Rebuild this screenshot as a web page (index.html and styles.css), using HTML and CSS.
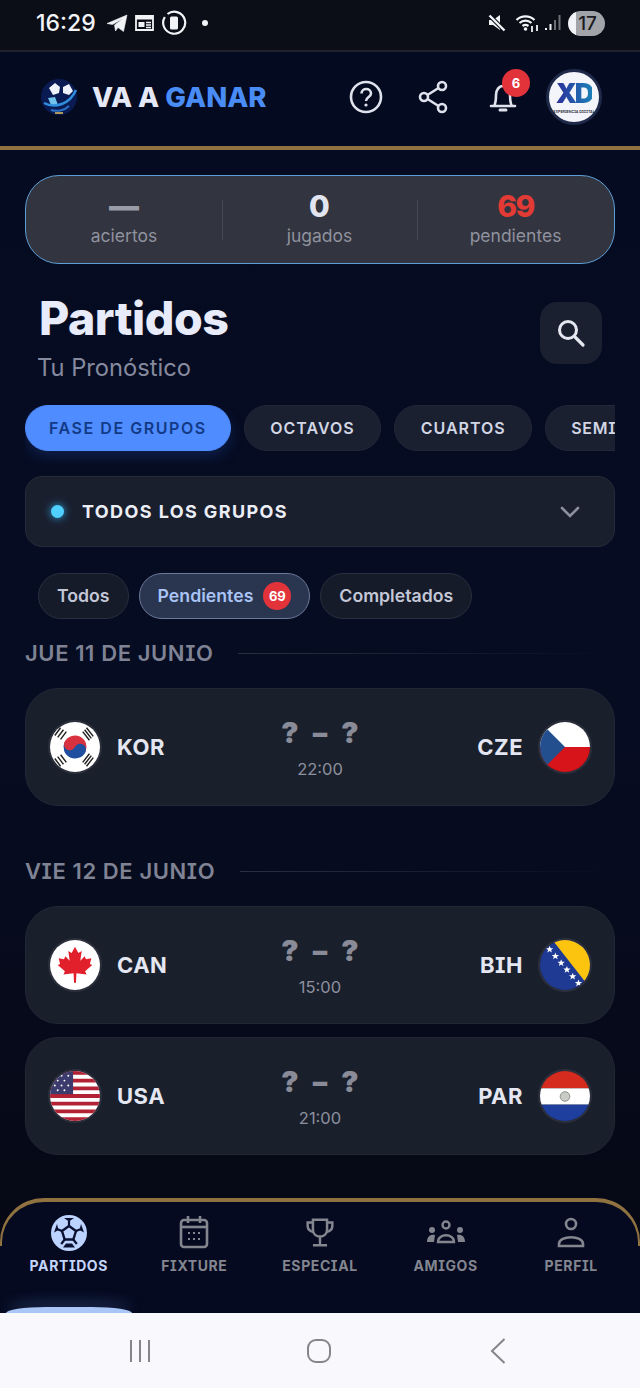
FILE: index.html
```html
<!DOCTYPE html>
<html lang="es">
<head>
<meta charset="UTF-8">
<title>Va a Ganar</title>
<link rel="stylesheet" href="styles.css">
</head>
<body>
<div id="app">

<div class="status">
  <div class="status-side">
    <span class="clock">16:29</span>
    <svg class="st-ico" width="22" height="20" viewBox="0 0 22 20"><path d="M1 10.500 21 2l-3.500 16.500-5.500-4-2.500 3.500-1-6 8.500-6.500-10.500 6z" fill="#f2f3f6" stroke="#f2f3f6" stroke-width=".6"/></svg>
    <svg class="st-ico" width="21" height="20" viewBox="0 0 21 20"><path d="M2 3h17v14H2z" fill="none" stroke="#f2f3f6" stroke-width="1.800"/><path d="M2 2.500h17v4H2z" fill="#f2f3f6"/><path d="M4.500 9h6v5h-6z" fill="#f2f3f6"/><path d="M12 9.500h5M12 12h5M12 14.500h5" stroke="#f2f3f6" stroke-width="1.300"/></svg>
    <svg class="st-ico" width="26" height="26" viewBox="0 0 26 26"><path d="M6.500 4A11 11 0 1 1 3.800 7" fill="none" stroke="#f2f3f6" stroke-width="2.200"/><rect x="9" y="6.500" width="8" height="13" rx="1.500" fill="#f2f3f6"/></svg>
    <span class="st-dot"></span>
  </div>
  <div class="status-side">
    <svg width="20" height="20" viewBox="0 0 20 20"><path d="M2 7h4l7-5v15l-7-5H2z" fill="#f2f3f6"/><path d="M2 2l16 16" stroke="#0b0d17" stroke-width="4.500"/><path d="M2.500 2.500l15 15" stroke="#f2f3f6" stroke-width="2.400"/></svg>
    <svg class="wifi" width="26" height="20" viewBox="0 0 26 20"><path d="M1.500 7a13 13 0 0 1 18 0M4.500 10a9 9 0 0 1 12 0M7.500 13a5 5 0 0 1 6 0" fill="none" stroke="#f2f3f6" stroke-width="2.200"/><circle cx="10.500" cy="16" r="1.800" fill="#f2f3f6"/><path d="M17 13v6M22 12v6" stroke="#f2f3f6" stroke-width="1.800"/></svg>
    <svg class="bars" width="18" height="20" viewBox="0 0 18 20"><path d="M2 17v-2M6.500 17v-6" stroke="#f2f3f6" stroke-width="2"/><path d="M11 17V7M15.500 17V2" stroke="#6e7078" stroke-width="2"/></svg>
    <span class="battery">17</span>
  </div>
</div>

<header class="topbar">
  <div class="brand">
    <svg class="brand-ball" width="38" height="38" viewBox="0 0 38 38">
      <circle cx="19" cy="19" r="18" fill="#0a1a52"/>
      <path d="M9 10l6-5 5 4-1 6-6 2zM23 9l6-3 4 7-4 4-6-2z" fill="#eef2fb"/>
      <path d="M8 20l7-1 3 8-7 0z" fill="#6fc3ec"/>
      <path d="M4 25c11 6 26 1 32-13" fill="none" stroke="#2f8fdc" stroke-width="2.500"/>
      <path d="M11 32c7 2 14 0 18-4" fill="none" stroke="#2a6fc4" stroke-width="2"/>
      <path d="M15 35h8" stroke="#d8b75c" stroke-width="1.600"/>
    </svg>
    <span class="brand-name">VA A <em>GANAR</em></span>
  </div>
  <div class="top-actions">
    <svg class="top-ico help" width="34" height="34" viewBox="0 0 34 34"><circle cx="17" cy="17" r="15" fill="none" stroke="#dfe2ec" stroke-width="2.600"/><path d="M12.500 13.500c0-6 9.500-6 9.500 0 0 3.500-5 3.500-5 7.500" fill="none" stroke="#dfe2ec" stroke-width="2.600"/><circle cx="17" cy="25" r="1.600" fill="#dfe2ec"/></svg>
    <svg class="top-ico share" width="32" height="34" viewBox="0 0 32 34"><circle cx="24" cy="6" r="4" fill="none" stroke="#dfe2ec" stroke-width="2.600"/><circle cx="6" cy="17" r="4" fill="none" stroke="#dfe2ec" stroke-width="2.600"/><circle cx="24" cy="28" r="4" fill="none" stroke="#dfe2ec" stroke-width="2.600"/><path d="M9.500 15 20.500 8M9.500 19l11 7" stroke="#dfe2ec" stroke-width="2.600"/></svg>
    <div class="bell-wrap">
      <svg width="30" height="36" viewBox="0 0 30 36"><path d="M3 27h24M6 27c2-3 2-6 2-11 0-5 3-9 7-9s7 4 7 9c0 5 0 8 2 11" fill="none" stroke="#dfe2ec" stroke-width="2.600" stroke-linecap="round"/><path d="M12 31h6" stroke="#dfe2ec" stroke-width="3" stroke-linecap="round"/></svg>
      <span class="bell-badge">6</span>
    </div>
    <div class="avatar">
      <span class="avatar-xd">XD</span>
      <span class="avatar-sub">EXPERIENCIA DIGITAL</span>
    </div>
  </div>
</header>

<main class="content">
  <section class="stats">
    <div class="stat"><b class="muted">—</b><span>aciertos</span></div>
    <div class="stat"><b>0</b><span>jugados</span></div>
    <div class="stat"><b class="red">69</b><span>pendientes</span></div>
  </section>

  <section class="title-row">
    <div>
      <h1>Partidos</h1>
      <p>Tu Pronóstico</p>
    </div>
    <button class="search-btn">
      <svg width="32" height="32" viewBox="0 0 32 32"><circle cx="13" cy="13" r="8.500" fill="none" stroke="#e4e7f0" stroke-width="3"/><path d="M19.500 19.500 28 28" stroke="#e4e7f0" stroke-width="3.200" stroke-linecap="round"/></svg>
    </button>
  </section>

  <nav class="tabs">
    <span class="tab active">FASE DE GRUPOS</span>
    <span class="tab">OCTAVOS</span>
    <span class="tab">CUARTOS</span>
    <span class="tab">SEMI</span>
  </nav>

  <div class="group-select">
    <span class="glow-dot"></span>
    <span class="group-name">TODOS LOS GRUPOS</span>
    <svg width="22" height="14" viewBox="0 0 22 14"><path d="M3 3l8 8 8-8" fill="none" stroke="#8b8f9e" stroke-width="2.600" stroke-linecap="round"/></svg>
  </div>

  <div class="chips">
    <span class="chip">Todos</span>
    <span class="chip on">Pendientes <i>69</i></span>
    <span class="chip">Completados</span>
  </div>

  <h2 class="date first">JUE 11 DE JUNIO</h2>
  <article class="match">
    <div class="team">
      <svg class="flag" viewBox="0 0 52 52">
        <rect width="52" height="52" fill="#fff"/>
        <g transform="rotate(25 26 26)">
          <path d="M14 26a12 12 0 0 1 24 0z" fill="#d8313f"/><path d="M14 26a12 12 0 0 0 24 0z" fill="#1f4f9e"/>
          <circle cx="20" cy="26" r="6" fill="#d8313f"/><circle cx="32" cy="26" r="6" fill="#1f4f9e"/>
        </g>
        <path d="M8 16l6-8M11 18l6-8M5 14l6-8M36 8l7 9M38 6l7 9M34 10l7 9M8 36l6 8M5 38l6 8M11 34l6 8M36 44l7-9M38 46l7-9M34 42l7-9" stroke="#222" stroke-width="1.500"/>
      </svg>
      <strong>KOR</strong>
    </div>
    <div class="score"><div class="score-nums"><b>?</b><b>–</b><b>?</b></div><time>22:00</time></div>
    <div class="team right">
      <strong>CZE</strong>
      <svg class="flag" viewBox="0 0 52 52">
        <rect width="52" height="26" fill="#fff"/><rect y="26" width="52" height="26" fill="#d7141a"/>
        <path d="M0 0l26 26L0 52z" fill="#234f8e"/>
      </svg>
    </div>
  </article>

  <h2 class="date">VIE 12 DE JUNIO</h2>
  <article class="match">
    <div class="team">
      <svg class="flag" viewBox="0 0 52 52">
        <rect width="52" height="52" fill="#fff"/>
        <path d="M26 7l-3.500 6.500-3.500-2 1.500 10-4.500-4.500-1.500 3-5.500-1 1.500 6-2.500 1 7.500 6.500-1.500 3.500 10.500-1.500.5 10h2l.5-10 10.500 1.500-1.500-3.500 7.500-6.500-2.500-1 1.500-6-5.500 1-1.500-3-4.500 4.500 1.500-10-3.500 2z" fill="#e2202c"/>
      </svg>
      <strong>CAN</strong>
    </div>
    <div class="score"><div class="score-nums"><b>?</b><b>–</b><b>?</b></div><time>15:00</time></div>
    <div class="team right">
      <strong>BIH</strong>
      <svg class="flag" viewBox="0 0 52 52">
        <rect width="52" height="52" fill="#1f3a93"/>
        <path d="M13 0h39v50z" fill="#fcc40f"/>
        <g fill="#fff">
          <path d="M10 6l1 2.600 2.800.1-2.200 1.700.8 2.700-2.400-1.600-2.400 1.600.8-2.700-2.200-1.700 2.800-.1z"/>
          <path d="M16 13l1 2.600 2.800.1-2.200 1.700.8 2.700-2.400-1.600-2.400 1.600.8-2.700-2.200-1.700 2.800-.1z"/>
          <path d="M22 20l1 2.600 2.800.1-2.200 1.700.8 2.700-2.400-1.600-2.400 1.600.8-2.700-2.200-1.700 2.800-.1z"/>
          <path d="M28 27l1 2.600 2.800.1-2.200 1.700.8 2.700-2.400-1.600-2.400 1.600.8-2.700-2.200-1.700 2.800-.1z"/>
          <path d="M34 34l1 2.600 2.800.1-2.200 1.700.8 2.700-2.400-1.600-2.400 1.600.8-2.700-2.200-1.700 2.800-.1z"/>
          <path d="M40 41l1 2.600 2.800.1-2.200 1.700.8 2.700-2.400-1.600-2.400 1.600.8-2.700-2.200-1.700 2.800-.1z"/>
        </g>
      </svg>
    </div>
  </article>

  <article class="match second">
    <div class="team">
      <svg class="flag" viewBox="0 0 52 52">
        <rect width="52" height="52" fill="#fff"/>
        <path d="M0 2h52M0 10h52M0 18h52M0 26h52M0 34h52M0 42h52M0 50h52" stroke="#b22234" stroke-width="4"/>
        <rect width="24" height="24" fill="#3c3b6e"/>
        <g fill="#fff"><circle cx="5" cy="5" r="1"/><circle cx="12" cy="5" r="1"/><circle cx="19" cy="5" r="1"/><circle cx="8" cy="10" r="1"/><circle cx="15" cy="10" r="1"/><circle cx="5" cy="15" r="1"/><circle cx="12" cy="15" r="1"/><circle cx="19" cy="15" r="1"/><circle cx="8" cy="20" r="1"/><circle cx="15" cy="20" r="1"/></g>
      </svg>
      <strong>USA</strong>
    </div>
    <div class="score"><div class="score-nums"><b>?</b><b>–</b><b>?</b></div><time>21:00</time></div>
    <div class="team right">
      <strong>PAR</strong>
      <svg class="flag" viewBox="0 0 52 52">
        <rect width="52" height="18" fill="#d52b1e"/><rect y="18" width="52" height="17" fill="#fff"/><rect y="35" width="52" height="17" fill="#1f3f9e"/>
        <circle cx="26" cy="26.500" r="5" fill="#c9ccc4" stroke="#8a8f84"/>
      </svg>
    </div>
  </article>
</main>

<nav class="bottom">
  <div class="nav-item active">
    <svg width="38" height="38" viewBox="0 0 38 38">
      <circle cx="19" cy="19" r="18" fill="#bcd2ff"/>
      <path d="M19 12l7 5-2.700 8.500h-8.600L12 17z" fill="none" stroke="#0a1030" stroke-width="2.400"/>
      <path d="M19 12V7M26 17l5-2M23.300 25.500l3.500 4.500M14.700 25.500l-3.500 4.500M12 17l-5-2" stroke="#0a1030" stroke-width="2.200"/>
      <path d="M14 4l10 0-5 3.500zM31 10l3 8.500-4.500-2.500zM7 10l-3 8.500 4.500-2.500zM13 33.500h12l-3-4h-6z" fill="#0a1030"/>
    </svg>
    <span>PARTIDOS</span>
  </div>
  <div class="nav-item">
    <svg width="34" height="38" viewBox="0 0 34 38"><rect x="4" y="6" width="26" height="27" rx="3" fill="none" stroke="#83868f" stroke-width="2.600"/><path d="M4 13h26" stroke="#83868f" stroke-width="2.600"/><path d="M11 2v7M23 2v7" stroke="#83868f" stroke-width="2.600"/><path d="M11 19h2M16 19h2M21 19h2M11 25h2M16 25h2M21 25h2" stroke="#83868f" stroke-width="2.200"/></svg>
    <span>FIXTURE</span>
  </div>
  <div class="nav-item">
    <svg width="30" height="38" viewBox="0 0 34 38"><path d="M9 4h16v11c0 5-3.500 8-8 8s-8-3-8-8z" fill="none" stroke="#83868f" stroke-width="2.800"/><path d="M9 7H3v4c0 4 3 6 7 7M25 7h6v4c0 4-3 6-7 7M17 23v9M9 33h16" fill="none" stroke="#83868f" stroke-width="2.800"/></svg>
    <span>ESPECIAL</span>
  </div>
  <div class="nav-item">
    <svg width="40" height="38" viewBox="0 0 40 38"><circle cx="20" cy="11" r="3.500" fill="none" stroke="#83868f" stroke-width="2.400"/><path d="M12 28c0-9 16-9 16 0z" fill="none" stroke="#83868f" stroke-width="2.400"/><circle cx="6" cy="16" r="3" fill="#83868f"/><circle cx="34" cy="16" r="3" fill="#83868f"/><path d="M1 28c0-6 4-8 8-7l-1 7zM39 28c0-6-4-8-8-7l1 7z" fill="#83868f"/></svg>
    <span>AMIGOS</span>
  </div>
  <div class="nav-item">
    <svg width="28" height="38" viewBox="0 0 28 38"><circle cx="14" cy="10" r="5" fill="none" stroke="#83868f" stroke-width="2.600"/><path d="M2 30c0-9 24-9 24 0v2H2z" fill="none" stroke="#83868f" stroke-width="2.600"/></svg>
    <span>PERFIL</span>
  </div>
  <span class="nav-pill"></span>
</nav>

<div class="android">
  <svg width="22" height="24" viewBox="0 0 22 24"><path d="M2 1v22M11 1v22M20 1v22" stroke="#85858a" stroke-width="2"/></svg>
  <svg width="26" height="26" viewBox="0 0 26 26"><rect x="2" y="2" width="22" height="22" rx="8" fill="none" stroke="#85858a" stroke-width="2"/></svg>
  <svg width="18" height="28" viewBox="0 0 18 28"><path d="M15.500 2 3 14l12.500 12" fill="none" stroke="#85858a" stroke-width="2"/></svg>
</div>

</div>
</body>
</html>
```
FILE: styles.css
```css
*{margin:0;padding:0;box-sizing:border-box}
html,body{background:#050a1c}
body{font-family:"Inter","Noto Sans",sans-serif;color:#e6e9f5;font-feature-settings:"cv08"}
#app{width:640px;height:1388px;display:flex;flex-direction:column;overflow:hidden;position:relative}

/* status bar */
.status{height:52px;flex:none;background:#0b0d17;border-bottom:2px solid #20222c;display:flex;justify-content:space-between;align-items:center;padding:0 35px 4px 36px}
.status-side{display:flex;align-items:center}
.clock{font-size:23px;font-weight:500;color:#f2f3f6;margin-right:10px}
.st-ico{margin-right:6px}
.st-dot{width:6px;height:6px;border-radius:50%;background:#f2f3f6;margin-left:9px}
.wifi{margin-left:8px}
.bars{margin-left:3px}
.battery{width:37px;height:25px;border-radius:13px;background:linear-gradient(90deg,#f2f3f6 0 8px,#a3a4a9 8px);color:#1b1c22;font-size:19px;font-weight:500;text-align:center;line-height:25px;margin-left:6px;padding-left:2px}

/* header */
.topbar{height:94px;flex:none;background:#040a20;display:flex;justify-content:space-between;align-items:center;padding:0 38px 4px 40px}
.brand{display:flex;align-items:center}
.brand-ball{margin-right:14px}
.brand-name{font-size:27.500px;font-weight:800;color:#e4e7f5}
.brand-name em{font-style:normal;color:#4a8cf5}
.top-actions{display:flex;align-items:center}
.help{margin-right:35px}
.share{margin-right:38px}
.bell-wrap{position:relative;width:30px;height:36px;margin-right:28px}
.bell-badge{position:absolute;top:-10px;left:14px;width:28px;height:28px;border-radius:50%;background:#e2333a;color:#fff;font-size:13px;font-weight:700;line-height:28px;text-align:center}
.avatar{width:56px;height:56px;border-radius:50%;background:#f3f5fa;border:3px solid #1f2a4a;display:flex;flex-direction:column;align-items:center;justify-content:center}
.avatar-xd{font-size:27px;line-height:27px;font-weight:900;letter-spacing:-2px;background:linear-gradient(90deg,#2b2f9a,#1c7fb8);-webkit-background-clip:text;background-clip:text;color:transparent}
.avatar-sub{font-size:3.600px;line-height:5px;color:#223;font-weight:600;margin-top:3px;white-space:nowrap}

/* main */
.content{flex:1;min-height:0;border-top:4px solid #8f7240;padding:25px 25px 0;background:linear-gradient(180deg,#050b20 0%,#060c22 45%,#060a18 80%,#05060c 100%)}
.stats{height:89px;border:1.5px solid #5b9fd6;border-radius:34px;background:#32343f;display:grid;grid-template-columns:196px 195px 1fr;align-items:center}
.stat{display:flex;flex-direction:column;align-items:center;height:54px;justify-content:space-between}
.stat+.stat{background:linear-gradient(#474a55,#474a55) left center/1px 40px no-repeat}
.stat b{font-size:30px;line-height:26px;font-weight:800;color:#e2e5f0}
.stat b.muted{color:#9a9ca8;font-weight:900}
.stat b.red{color:#e23a34;letter-spacing:-1.500px}
.stat span{font-size:17.500px;line-height:22px;color:#8f929e}

.title-row{display:flex;justify-content:space-between;align-items:center;margin-top:25px;padding:0 13px 0 14px}
.title-row h1{font-size:46.500px;line-height:58px;font-weight:800;color:#e8ebfa;letter-spacing:-.5px}
.title-row p{font-size:23.700px;line-height:30px;color:#858a9e;margin-top:6px;margin-left:-2px}
.search-btn{width:62px;height:62px;border:0;border-radius:17px;background:#1b2030;display:flex;align-items:center;justify-content:center;margin-top:-7px}

.tabs{display:flex;gap:13px;overflow:hidden;margin-top:22px;height:60px;width:590px}
.tab{flex:none;height:46px;line-height:44px;padding:0 25.500px;border-radius:23px;background:#1a2030;border:1px solid #232838;color:#d2d6e4;font-size:16px;font-weight:600;letter-spacing:1px}
.tab:last-child{padding:0 40px 0 25px;letter-spacing:.7px}
.tab.active{background:#4f8cff;border-color:#4f8cff;color:#123a86;letter-spacing:1.550px;padding:0 23px;box-shadow:0 6px 14px rgba(40,90,200,.25)}

.group-select{height:71px;margin-top:11px;background:#1a1f2e;border:1px solid #262b3a;border-radius:17px;display:flex;align-items:center;padding:0 33px 0 25px}
.glow-dot{width:13px;height:13px;border-radius:50%;background:#4fd0ff;box-shadow:0 0 8px #2fa8e8;margin-right:18px}
.group-name{flex:1;font-size:18px;font-weight:700;letter-spacing:1.400px;color:#eceef6}

.chips{display:flex;gap:10px;margin-top:26px;padding-left:13px}
.chip{height:46px;line-height:44px;padding:0 18px;border-radius:23px;background:#161b29;border:1px solid #2a2f3e;color:#c3c7d6;font-size:17.700px;font-weight:600;display:flex;align-items:center}
.chip.on{background:#2a3550;border-color:#6c7a99;color:#a9c3f5;gap:10px}
.chip i{font-style:normal;width:28px;height:28px;border-radius:50%;background:#e2333a;color:#fff;font-size:13px;font-weight:700;line-height:28px;text-align:center}

.date{display:flex;align-items:center;gap:25px;font-size:22px;line-height:24px;font-weight:600;color:#7f8394;letter-spacing:.6px;margin-top:53px;margin-bottom:23px}
.date.first{margin-top:22px}
.date::after{content:"";flex:1;height:1px;background:linear-gradient(90deg,#2a2f40,rgba(42,47,64,0))}

.match{height:118px;border-radius:33px;background:#1a1f2c;border:1px solid #222736;display:grid;grid-template-columns:1fr 120px 1fr;align-items:center;padding:0 22px}
.match.second{margin-top:13px}
.team{display:flex;align-items:center;gap:15px}
.team.right{justify-content:flex-end}
.team strong{font-size:22px;font-weight:700;color:#e4e7f2;letter-spacing:.5px}
.flag{width:54px;height:54px;border-radius:50%;border:2.500px solid #2c2f3c;flex:none}
.score{display:flex;flex-direction:column;align-items:center;padding-top:2px}
.score-nums{display:flex;gap:14px;font-size:29px;line-height:34px;color:#898c98}
.score-nums b{font-weight:900}
.score time{font-size:16.500px;line-height:22px;color:#8d909e;margin-top:8px}

/* bottom tab bar */
.bottom{position:absolute;left:0;right:0;top:1198px;height:115px;background:#050a20;border-radius:44px 44px 0 0;display:grid;grid-template-columns:repeat(5,1fr);padding:16px 6px 0}
.bottom::before{content:"";position:absolute;left:0;right:0;top:0;height:44px;border:solid #8f7240;border-width:4px 2px 0;border-radius:44px 44px 0 0}
.nav-item{display:flex;flex-direction:column;align-items:center;color:#83868f;font-size:14px;font-weight:700;letter-spacing:.6px}
.nav-item span{margin-top:5px;line-height:18px}
.nav-item.active{color:#c4d6fb}
.nav-pill{position:absolute;left:6px;bottom:0;width:126px;height:6px;border-radius:40px 40px 0 0/6px 6px 0 0;background:#a9c6f7;box-shadow:0 -4px 14px rgba(120,170,255,.35)}

.android{position:absolute;left:0;right:0;top:1313px;height:75px;background:#f9f8fc;display:grid;grid-template-columns:140px 180px 178px;justify-content:start;align-items:center}
.android svg:nth-child(1){justify-self:end;margin-right:-11px}
.android svg:nth-child(2){justify-self:end;margin-right:-12px}
.android svg:nth-child(3){justify-self:end;margin-right:-9px}
```
